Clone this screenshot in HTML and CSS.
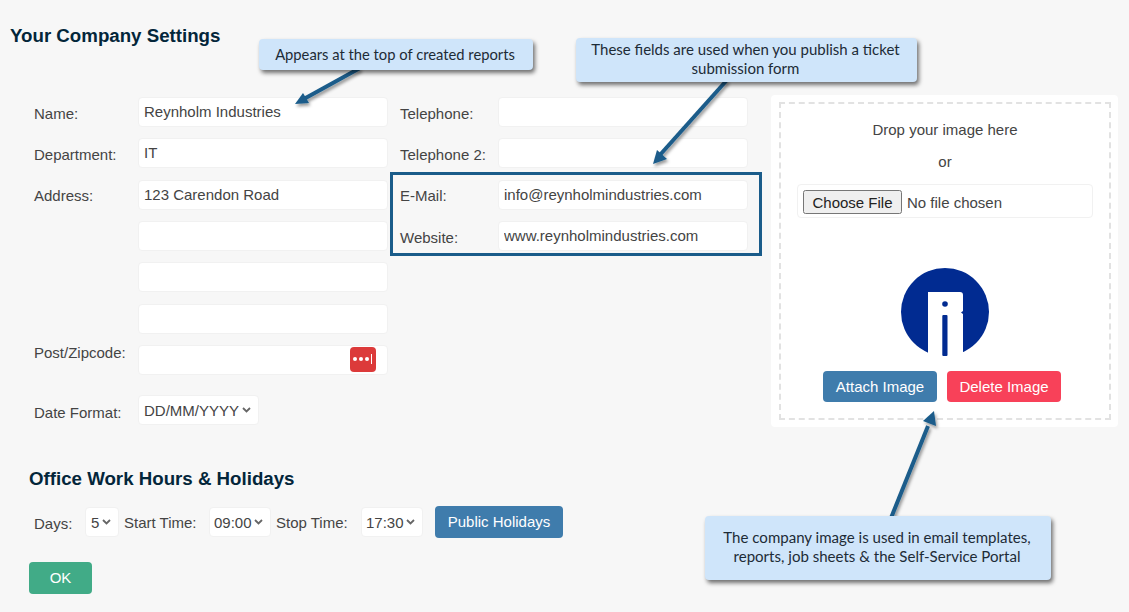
FILE: index.html
```html
<!DOCTYPE html>
<html lang="en">
<head>
<meta charset="utf-8">
<title>Your Company Settings</title>
<link rel="stylesheet" href="styles.css">
</head>
<body>
<div class="page">
  <h1 class="title">Your Company Settings</h1>
  <div class="settings">
    <form class="fields fields-left">
      <label class="lbl">Name:</label><input class="inp" value="Reynholm Industries">
      <label class="lbl">Department:</label><input class="inp" value="IT">
      <label class="lbl lbl-address">Address:</label><input class="inp" value="123 Carendon Road">
      <span></span><input class="inp">
      <span></span><input class="inp">
      <span></span><input class="inp">
      <label class="lbl lbl-top">Post/Zipcode:</label>
      <div class="inp-wrap">
        <input class="inp">
        <span class="pw-icon"><i></i><i></i><i></i><b></b></span>
      </div>
      <label class="lbl lbl-date">Date Format:</label>
      <select class="sel sel-date"><option>DD/MM/YYYY</option></select>
    </form>
    <form class="fields fields-right">
      <label class="lbl">Telephone:</label><input class="inp">
      <label class="lbl">Telephone 2:</label><input class="inp">
      <label class="lbl lbl-up">E-Mail:</label><input class="inp" value="info@reynholmindustries.com">
      <label class="lbl">Website:</label><input class="inp" value="www.reynholmindustries.com">
    </form>
    <aside class="panel">
      <div class="drop">
        <p class="drop-text">Drop your image here</p>
        <p class="drop-or">or</p>
        <div class="file-box"><input class="file" type="file"></div>
        <svg class="logo" width="90" height="92" viewBox="0 0 90 92" aria-label="Company logo">
          <circle cx="45" cy="44" r="44" fill="#012b91"/>
          <path d="M28 24H60Q63 24 63 27V43L61 44.500L63 46V92H28Z" fill="#fff"/>
          <circle cx="45" cy="36" r="2.800" fill="#012b91"/>
          <rect x="42.300" y="47" width="5.200" height="41" rx="1" fill="#012b91"/>
        </svg>
        <div class="img-btns">
          <button class="btn btn-blue" type="button">Attach Image</button>
          <button class="btn btn-red" type="button">Delete Image</button>
        </div>
      </div>
    </aside>
  </div>
  <h2 class="subtitle">Office Work Hours &amp; Holidays</h2>
  <div class="hours">
    <label class="lbl-inline lbl-days">Days:</label>
    <select class="sel sel-days"><option>5</option></select>
    <label class="lbl-inline lbl-start">Start Time:</label>
    <select class="sel sel-time"><option>09:00</option></select>
    <label class="lbl-inline lbl-stop">Stop Time:</label>
    <select class="sel sel-time"><option>17:30</option></select>
    <button class="btn btn-blue btn-holidays" type="button">Public Holidays</button>
  </div>
  <button class="btn btn-green" type="button">OK</button>

  <div class="highlight"></div>
  <svg class="arrows" width="1129" height="612" viewBox="0 0 1129 612" aria-hidden="true">
    <defs>
      <filter id="arrow-shadow" x="-30%" y="-30%" width="160%" height="160%">
        <feDropShadow dx="1.500" dy="2.500" stdDeviation="1.500" flood-color="#000" flood-opacity=".4"/>
      </filter>
    </defs>
    <g filter="url(#arrow-shadow)">
      <g stroke="#1a5c8a" stroke-width="4" fill="none">
        <path d="M360 68 L302 100"/>
        <path d="M727 80 L659 156"/>
        <path d="M891 518 L928 426"/>
      </g>
      <g fill="#1a5c8a">
        <path d="M295 104 L303 93 L309 103 Z"/>
        <path d="M653 164 L657 150 L667 159 Z"/>
        <path d="M934 411 L936 426 L923 421 Z"/>
      </g>
    </g>
  </svg>
  <div class="callout callout-top">Appears at the top of created reports</div>
  <div class="callout callout-fields">These fields are used when you publish a ticket submission form</div>
  <div class="callout callout-image">The company image is used in email templates, reports, job sheets &amp; the Self-Service Portal</div>
</div>
</body>
</html>
```
FILE: styles.css
```css
* { box-sizing: border-box; }
html, body { margin: 0; padding: 0; }
body {
  background: #f7f7f7;
  color: #444;
  font-family: "Liberation Sans", Arial, sans-serif;
  font-size: 15px;
}
.page { position: relative; width: 1129px; height: 612px; overflow: hidden; padding-top: 25px; }
.title, .subtitle { margin: 0; color: #03263a; font-size: 18.700px; line-height: 22px; font-weight: 700; }
.title { margin-left: 10px; margin-bottom: 49px; }
.subtitle { margin: 40px 0 16px 29px; }
.settings { display: flex; align-items: flex-start; padding-left: 34px; height: 332px; }
.fields { display: grid; grid-auto-rows: 30px; row-gap: 11.330px; margin: 1px 0 0; }
.fields-left { grid-template-columns: 104px 250px; width: 354px; margin-right: 12px; }
.fields-right { grid-template-columns: 98px 250px; width: 348px; margin-right: 23px; }
.lbl { padding-top: 8px; line-height: 17px; white-space: nowrap; }
.lbl-up { padding-top: 7px; }
.lbl-address { padding-top: 7px; }
.lbl-top { padding-top: 0; margin-top: -1px; }
.lbl-date { margin-top: 9px; padding-top: 9px; }
.inp {
  display: block; width: 100%; height: 30px; padding: 0 5px 1px;
  border: 1px solid #f1f1f1; border-radius: 4px; background: #fff;
  color: #444; font: inherit; outline: none;
}
.inp-wrap { position: relative; }
.pw-icon {
  position: absolute; left: 212px; top: 2px; width: 26px; height: 25px;
  display: flex; align-items: center; gap: 2px; padding-left: 3px;
  background: #dc3a3a; border-radius: 4px;
}
.pw-icon i { width: 4px; height: 4px; border-radius: 50%; background: #fff; }
.pw-icon b { width: 1px; height: 10px; background: #fff; }
.sel {
  height: 30px; padding: 0 0 0 5px; border: 1px solid #f1f1f1; border-radius: 4px;
  color: #444; font: inherit; outline: none; appearance: none;
  background: #fff url("data:image/svg+xml,%3Csvg xmlns='http://www.w3.org/2000/svg' width='9' height='6' viewBox='0 0 9 6'%3E%3Cpath d='M1 1l3.500 3.500L8 1' fill='none' stroke='%23666' stroke-width='1.800'/%3E%3C/svg%3E") no-repeat right 7px center;
}
.sel-date { width: 121px; margin-top: 9px; }
.sel-days { width: 34px; }
.sel-time { width: 62px; padding-left: 4px; }
.panel { width: 347px; height: 332px; margin-top: -1px; padding: 7px 7px 7px 8px; background: #fff; border-radius: 4px; }
.drop { height: 318px; border: 2px dashed #e2e2e2; display: flex; flex-direction: column; align-items: center; }
.drop-text { margin: 17px 0 0; line-height: 17px; }
.drop-or { margin: 15px 0 0; line-height: 17px; }
.file-box { width: 296px; height: 34px; margin-top: 14px; padding: 5px; border: 1px solid #f1f1f1; border-radius: 4px; background: #fff; }
.file { display: block; font-family: inherit; font-size: 15px; color: #444; }
.file::file-selector-button { font: inherit; color: #222; width: 99px; height: 24px; padding: 0; margin-right: 5px; }
.logo { display: block; margin-top: 50px; flex: none; }
.img-btns { display: flex; gap: 10px; margin-top: 11px; margin-right: 6px; }
.btn { border: 0; border-radius: 4px; color: #fff; font: inherit; height: 31px; padding: 0; }
.btn-blue { background: #3f7cac; width: 114px; }
.btn-red { background: #f84159; width: 114px; }
.btn-holidays { width: 128px; height: 32px; margin-left: 12px; padding-bottom: 2px; }
.btn-green { display: block; background: #41ab87; width: 63px; height: 32px; margin: 24px 0 0 29px; padding-bottom: 2px; }
.hours { display: flex; align-items: center; height: 32px; padding-left: 34px; }
.lbl-inline { white-space: nowrap; }
.lbl-days { width: 51px; padding-top: 3px; }
.lbl-start { width: 85px; margin-left: 5px; }
.lbl-stop { width: 85px; margin-left: 5px; }
.highlight { position: absolute; left: 390px; top: 172px; width: 372px; height: 84px; border: 3px solid #1a5c8a; }
.arrows { position: absolute; left: 0; top: 0; pointer-events: none; }
.callout {
  position: absolute; display: flex; align-items: center; justify-content: center; text-align: center;
  background: #cfe5fa; border-radius: 4px; color: #1d2b36;
  font-family: Lato, "Open Sans", sans-serif; font-size: 15px; line-height: 19px;
  box-shadow: 2px 3px 4px rgba(0,0,0,.55);
}
.callout-top { left: 259px; top: 39px; width: 274px; height: 31px; font-size: 14.750px; padding-right: 2px; }
.callout-fields { left: 576px; top: 38px; width: 341px; height: 44px; padding: 0 12px 2px 10px; }
.callout-image { left: 705px; top: 516px; width: 346px; height: 64px; padding: 0 17px 2px 15px; font-size: 15.050px; }
```
